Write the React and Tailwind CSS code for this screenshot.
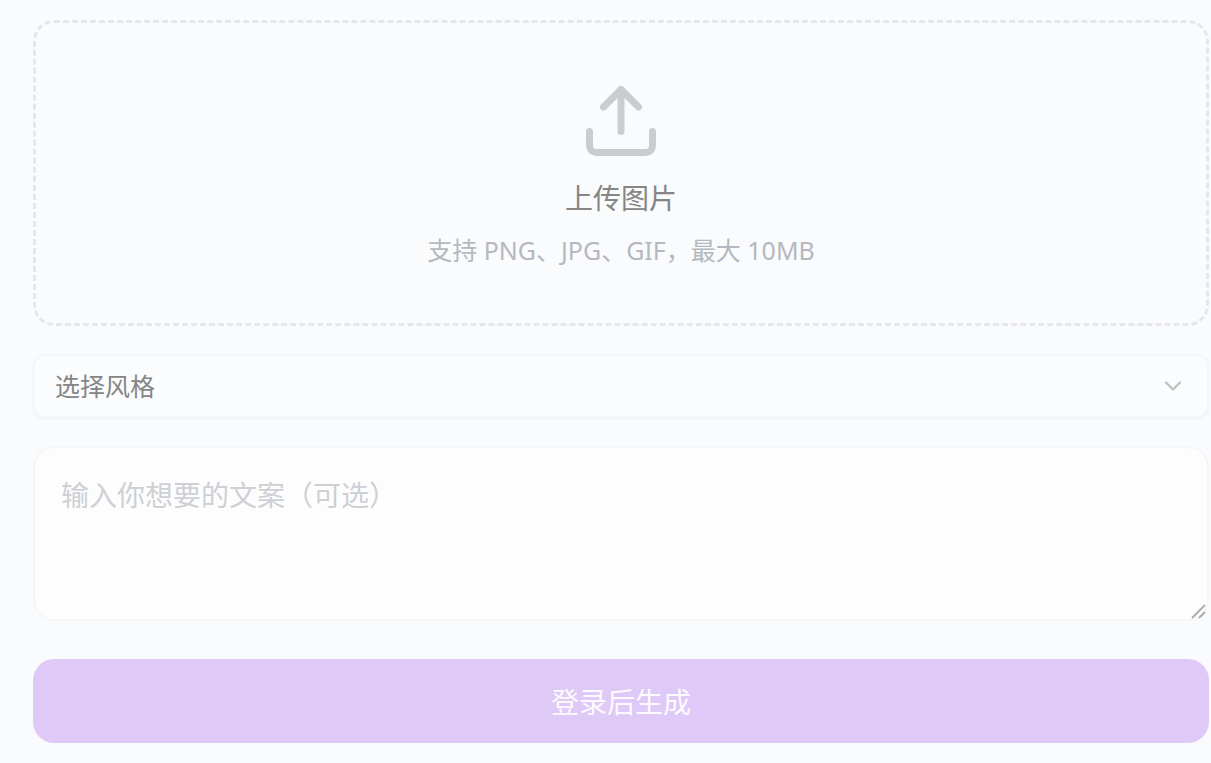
import { useState } from 'react';
import { ChevronDown, Upload } from 'lucide-react';

const STYLES = ['卡通', '写实', '手绘', '像素'];

function UploadArea() {
  return (
    <label
      htmlFor="image"
      className="flex h-[306px] cursor-pointer flex-col items-center rounded-[21px] border-3 border-dashed border-[#e6e7e9] pt-14"
    >
      <Upload className="size-[84px] text-[#c9cdd1]" strokeWidth={2} aria-hidden="true" />
      <span className="mt-3.5 text-[28px] leading-[42px] text-[#858585]">上传图片</span>
      <span className="mt-3.5 text-[25px] leading-[35px] text-[#b5b8be]">
        支持 PNG、JPG、GIF，最大 10MB
      </span>
      <input id="image" type="file" accept="image/png,image/jpeg,image/gif" className="sr-only" />
    </label>
  );
}

function StyleSelect() {
  const [value, setValue] = useState('');
  return (
    <div className="relative mt-7">
      <select
        aria-label="选择风格"
        value={value}
        onChange={(e) => setValue(e.target.value)}
        className="block h-16 w-full appearance-none rounded-xl border-2 border-[#f5f6f7] bg-[#fbfcfd] px-5 pt-0.5 text-[25px] text-[#858585] shadow-xs outline-none"
      >
        <option value="">选择风格</option>
        {STYLES.map((name) => (
          <option key={name} value={name}>
            {name}
          </option>
        ))}
      </select>
      <ChevronDown
        className="pointer-events-none absolute inset-y-0 right-[22px] my-auto size-7 text-[#bfc0c1]"
        strokeWidth={2}
        aria-hidden="true"
      />
    </div>
  );
}

function CaptionField() {
  return (
    <div className="relative mt-7">
      <textarea
        aria-label="文案"
        placeholder="输入你想要的文案（可选）"
        className="block h-[175px] w-full resize-none rounded-[21px] border-2 border-[#f5f6f7] bg-[#fdfdfd] px-[26px] py-[26px] text-[28px] leading-[42px] text-[#858585] outline-none placeholder:text-[#cdd0d5]"
      />
      <svg
        className="pointer-events-none absolute right-0.5 bottom-0.5 size-4 text-[#acacac]"
        viewBox="0 0 16 16"
        fill="none"
        stroke="currentColor"
        strokeWidth="1.8"
        aria-hidden="true"
      >
        <path d="M1 15 14 2M8 15l6-6" />
      </svg>
    </div>
  );
}

export default function App() {
  return (
    <main className="min-h-screen bg-[#fafbfd] pt-5 pr-0.5 pb-5 pl-[33px] font-['Noto_Sans','Noto_Sans_CJK_SC',sans-serif]">
      <form onSubmit={(e) => e.preventDefault()}>
        <UploadArea />
        <StyleSelect />
        <CaptionField />
        <button
          type="submit"
          className="mt-[38px] block h-[84px] w-full rounded-[21px] bg-[#dfc9f6] pt-0.5 text-[28px] text-[#fdfaff]"
        >
          登录后生成
        </button>
      </form>
    </main>
  );
}
